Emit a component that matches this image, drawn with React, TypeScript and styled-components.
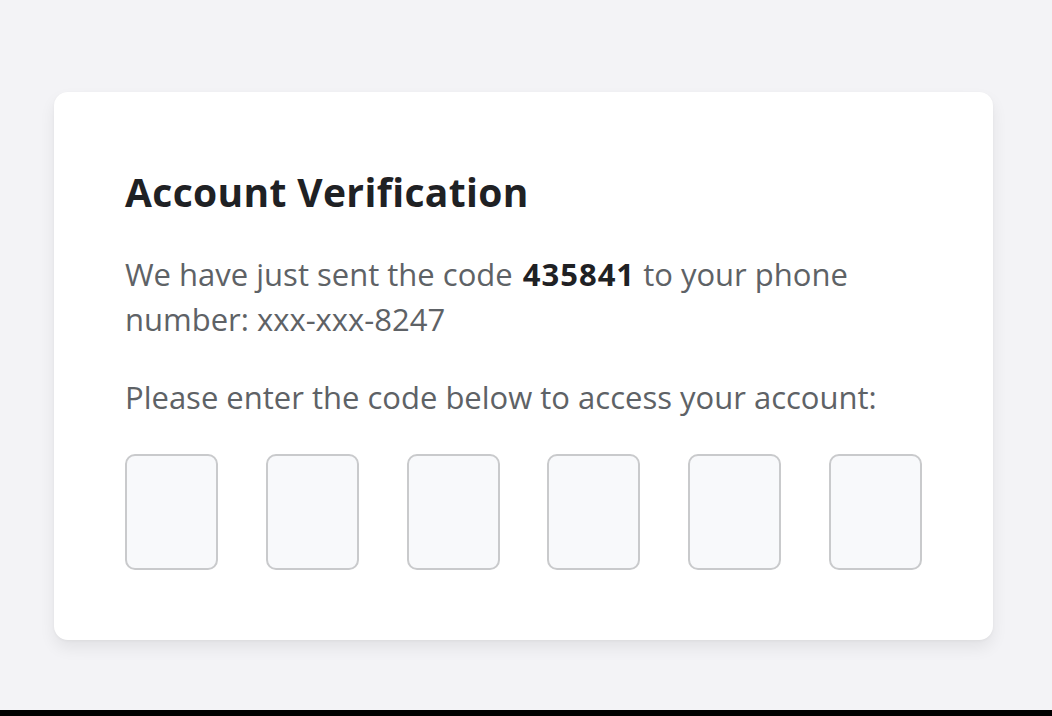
import React from 'react';
import styled, { createGlobalStyle } from 'styled-components';

const GlobalStyle = createGlobalStyle`
  html, body {
    margin: 0;
    padding: 0;
    background: #000;
  }
  body {
    font-family: "Open Sans", "Noto Sans", sans-serif;
  }
`;

const Page = styled.div`
  width: 1052px;
  height: 710px;
  background: #f3f3f6;
  padding: 92px 59px 0 54px;
  box-sizing: border-box;
`;

const Card = styled.div`
  background: #ffffff;
  border-radius: 14px;
  height: 548px;
  box-sizing: border-box;
  padding: 76px 71px 0 71px;
  box-shadow: 0 8px 16px rgba(0, 0, 0, 0.07), 0 1px 3px rgba(0, 0, 0, 0.04);
`;

const Title = styled.h1`
  margin: 0;
  font-size: 39px;
  font-weight: 700;
  color: #1f2124;
  line-height: 48px;
  letter-spacing: 0.35px;
`;

const Text = styled.p<{ $gap?: number }>`
  margin: ${p => p.$gap ?? 0}px 0 0 0;
  font-size: 31px;
  line-height: 45px;
  color: #5e6266;
`;

const Code = styled.strong`
  color: #1f2124;
  font-weight: 700;
  letter-spacing: 1px;
  margin-left: 2px;
`;

const Boxes = styled.div`
  display: flex;
  justify-content: space-between;
  margin-top: 34px;
`;

const Box = styled.input`
  width: 93px;
  height: 116px;
  box-sizing: border-box;
  border: 2px solid #c9cacc;
  border-radius: 10px;
  background: #f8f9fb;
  font-family: inherit;
  font-size: 36px;
  text-align: center;
  outline: none;
`;

export default function App() {
  return (
    <>
      <GlobalStyle />
      <Page>
        <Card>
          <Title>Account Verification</Title>
          <Text $gap={36}>
            We have just sent the code <Code>435841</Code> to your phone number: xxx-xxx-8247
          </Text>
          <Text $gap={33}>Please enter the code below to access your account:</Text>
          <Boxes>
            {Array.from({ length: 6 }).map((_, i) => (
              <Box key={i} maxLength={1} aria-label={`Digit ${i + 1}`} />
            ))}
          </Boxes>
        </Card>
      </Page>
    </>
  );
}
